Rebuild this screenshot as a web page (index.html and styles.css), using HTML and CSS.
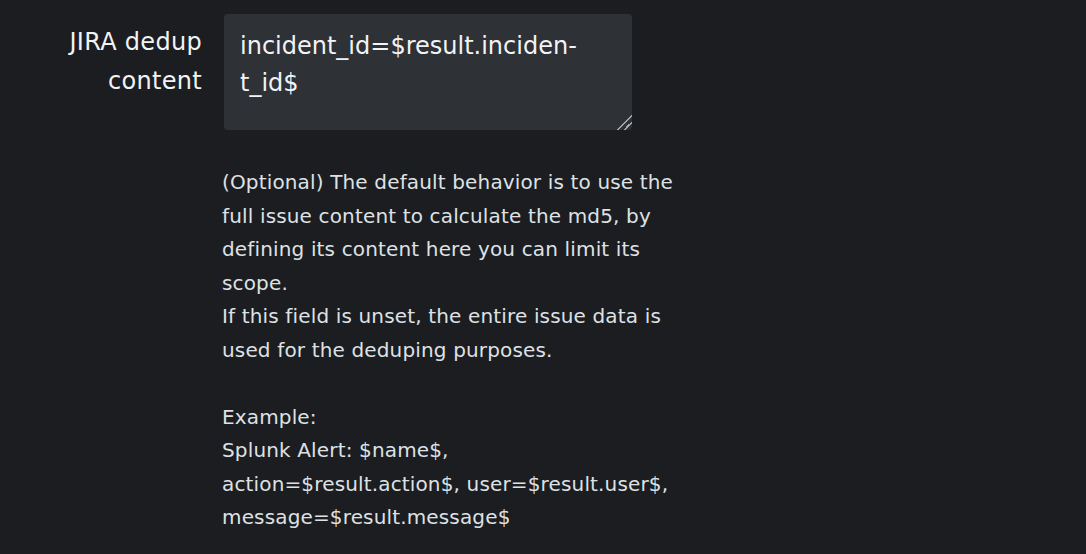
FILE: index.html
```html
<!DOCTYPE html>
<html lang="en">
<head>
<meta charset="utf-8">
<title>JIRA dedup content</title>
<link rel="stylesheet" href="styles.css">
</head>
<body>
<div class="form-row">
  <label class="field-label" for="dedup">JIRA dedup content</label>
  <div class="field-body">
    <textarea id="dedup" class="field-input">incident_id=$result.inciden&shy;t_id$</textarea>
    <p class="help">(Optional) The default behavior is to use the full issue content to calculate the md5, by defining its content here you can limit its scope.<br>If this field is unset, the entire issue data is used for the deduping purposes.<br><br>Example:<br>Splunk Alert: $name$,<br>action=$result.action$, user=$result.user$,<br>message=$result.message$</p>
  </div>
</div>
</body>
</html>
```

FILE: styles.css
```css
html, body {
  margin: 0;
  padding: 0;
  background: #1b1d21;
  height: 100%;
}
body {
  font-family: "DejaVu Sans", "Open Sans", sans-serif;
  color: #eceef0;
}
.form-row {
  display: flex;
  gap: 22px;
  padding-top: 14px;
}
.field-label {
  flex: none;
  width: 202px;
  text-align: right;
  font-size: 24px;
  letter-spacing: 0.3px;
  line-height: 39px;
  padding-top: 9px;
  color: #f2f3f5;
}
.field-body {
  display: flex;
  flex-direction: column;
}
.field-input {
  box-sizing: border-box;
  width: 408px;
  height: 116px;
  background: #2e3135;
  border: none;
  border-radius: 4px;
  color: #f2f3f5;
  font-family: inherit;
  font-size: 24px;
  line-height: 37px;
  padding: 14px 16px 12px;
  margin: 0;
  hyphens: manual;
  resize: vertical;
  outline: none;
  color-scheme: dark;
}
.field-input::-webkit-resizer {
  background: linear-gradient(135deg, transparent 47%, #a4a7ab 47% 56%, transparent 56% 70%, #a4a7ab 70% 79%, transparent 79%);
}
.help {
  margin: 36px 0 0 -2px;
  width: 472px;
  font-size: 20px;
  letter-spacing: 0.15px;
  line-height: 33.5px;
  color: #dfe1e4;
}
```
